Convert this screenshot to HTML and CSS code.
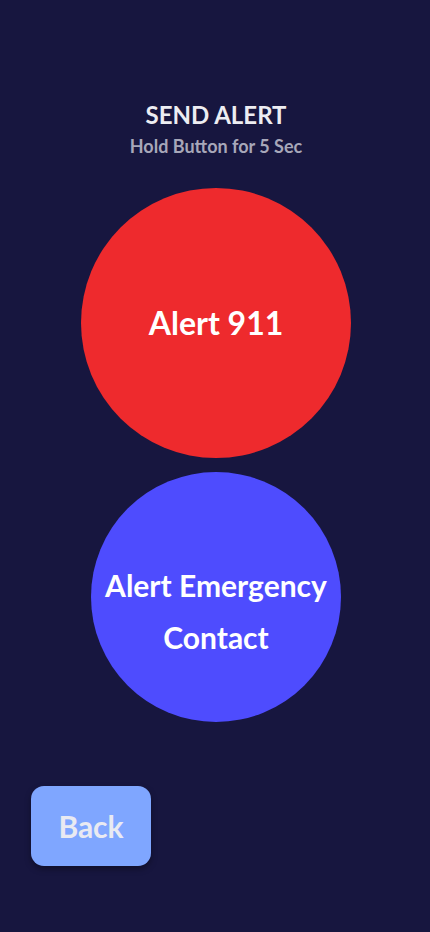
FILE: index.html
```html
<!DOCTYPE html>
<html>
<head>
<meta charset="utf-8">
<link rel="stylesheet" href="styles.css">
</head>
<body>
<main class="screen">
  <header class="header">
    <h1 class="title">SEND ALERT</h1>
    <p class="subtitle">Hold Button for 5 Sec</p>
  </header>
  <button class="circle circle-911">Alert 911</button>
  <button class="circle circle-contact">Alert Emergency Contact</button>
  <button class="back">Back</button>
</main>
</body>
</html>
```
FILE: styles.css
```css
* { box-sizing: border-box; }
html, body {
  margin: 0;
  padding: 0;
  background: #17163f;
}
body {
  font-family: Lato, "Noto Sans", sans-serif;
  width: 430px;
  height: 932px;
  overflow: hidden;
}
.screen {
  display: flex;
  flex-direction: column;
  align-items: center;
  padding-top: 100px;
  padding-left: 2px;
}
.header {
  display: flex;
  flex-direction: column;
  align-items: center;
}
.title {
  margin: 0;
  font-size: 24px;
  font-weight: 700;
  line-height: 29px;
  color: #ededf2;
}
.subtitle {
  margin: 6px 0 0;
  font-size: 18px;
  font-weight: 700;
  line-height: 22px;
  color: #a7a7b9;
}
.circle {
  border: none;
  border-radius: 50%;
  color: #ffffff;
  font-family: inherit;
  font-weight: 700;
  display: flex;
  align-items: center;
  justify-content: center;
  text-align: center;
  padding: 0;
}
.circle-911 {
  width: 270px;
  height: 270px;
  margin-top: 31px;
  background: #ee2a2d;
  font-size: 32px;
  line-height: 38px;
}
.circle-contact {
  width: 250px;
  height: 250px;
  margin-top: 14px;
  padding-top: 27px;
  background: #4e4cfe;
  font-size: 30px;
  line-height: 52px;
}
.back {
  align-self: flex-start;
  margin-left: 29px;
  margin-top: 64px;
  width: 120px;
  height: 80px;
  border: none;
  border-radius: 13px;
  background: #7fa6ff;
  color: #e9eaf2;
  font-family: inherit;
  font-weight: 700;
  font-size: 30px;
  line-height: 36px;
  box-shadow: 0 3px 6px rgba(0,0,0,0.35);
}
```
